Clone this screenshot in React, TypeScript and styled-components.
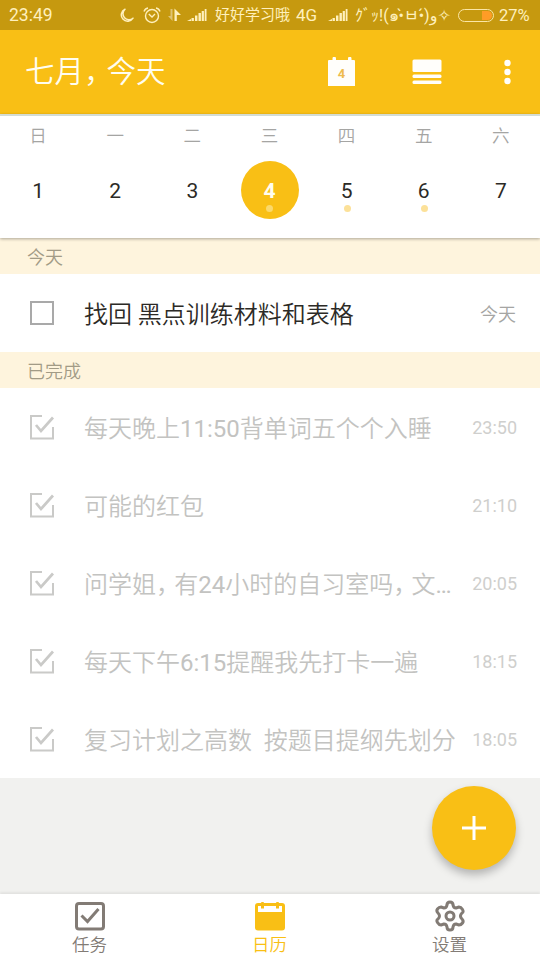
import React from "react";
import styled, { createGlobalStyle } from "styled-components";

const YELLOW = "#f9bf15";

const GlobalStyle = createGlobalStyle`
  * { box-sizing: border-box; }
  body {
    margin: 0;
    background: #f1f1ef;
    font-family: Roboto, "Noto Sans CJK SC", "DejaVu Sans", sans-serif;
  }
  svg { display: block; flex: none; }
`;

const Screen = styled.div`
  width: 540px;
  height: 960px;
  display: flex;
  flex-direction: column;
  overflow: hidden;
  background: #f1f1ef;
`;

const StatusBar = styled.div`
  height: 30px;
  flex: none;
  display: flex;
  align-items: center;
  justify-content: space-between;
  padding: 0 9px;
  background: #c6990f;
  color: #fff0bd;
  font-size: 17.5px;
  line-height: 31px;
  white-space: nowrap;
`;

const StatusGroup = styled.div`
  display: flex;
  align-items: center;
  height: 30px;
`;

const StatusText = styled.span<{ $w: number; $size?: number; $ml?: number }>`
  width: ${(p) => p.$w}px;
  margin-left: ${(p) => p.$ml ?? 0}px;
  font-size: ${(p) => p.$size ?? 17}px;
`;

const StatusIcon = styled.svg<{ $ml: number }>`
  margin-left: ${(p) => p.$ml}px;
`;

const Battery = styled.div`
  width: 36px;
  height: 13px;
  margin-left: 6px;
  padding: 1px;
  border: 1px solid #fbe6a5;
  border-radius: 7px;
  display: flex;
  justify-content: flex-end;
`;

const Charge = styled.div`
  width: 10px;
  border-radius: 0 5px 5px 0;
  background: #ff9c26;
`;

const Header = styled.header`
  height: 84px;
  flex: none;
  display: flex;
  align-items: center;
  padding: 0 29px 0 25px;
  background: ${YELLOW};
`;

const Title = styled.h1`
  margin: 0;
  flex: 1;
  color: #fffdf0;
  font-size: 29.5px;
  font-weight: 350;
  line-height: 88px;
  white-space: nowrap;
`;

const Comma = styled.span`
  letter-spacing: -0.24em;
`;

const Latin = styled.span`
  font-weight: 400;
`;

const HeaderActions = styled.div`
  display: flex;
  align-items: center;
`;

const HeaderIcon = styled.svg<{ $mr?: number }>`
  margin-right: ${(p) => p.$mr ?? 0}px;
`;

const Week = styled.section`
  height: 124px;
  flex: none;
  display: grid;
  grid-template-columns: repeat(7, 77.14px);
  background: #fff;
  box-shadow: 0 1px 3px rgba(0, 0, 0, 0.32);
  border-top: 2px solid #d3dcd4;
  z-index: 1;
`;

const Day = styled.div`
  display: flex;
  flex-direction: column;
  align-items: center;
`;

const Weekday = styled.span`
  height: 38px;
  padding-right: 1px;
  color: #a5a5a3;
  font-size: 17.5px;
  font-weight: 350;
  line-height: 40px;
`;

const DateCircle = styled.div<{ $active?: boolean }>`
  width: 58px;
  height: 58px;
  margin-top: 7px;
  display: flex;
  flex-direction: column;
  align-items: center;
  border-radius: 50%;
  background: ${(p) => (p.$active ? YELLOW : "transparent")};
  color: ${(p) => (p.$active ? "#fffdf0" : "#2c2a26")};
  font-size: 21px;
  font-weight: ${(p) => (p.$active ? 700 : 400)};
  line-height: 60px;
`;

const DateNumber = styled.span`
  height: 44px;
  padding-right: 1px;
`;

const Dot = styled.i<{ $active?: boolean }>`
  width: 7px;
  height: 7px;
  border-radius: 50%;
  background: ${(p) => (p.$active ? "#fbd96b" : "#fce199")};
`;

const SectionLabel = styled.div`
  height: 36px;
  flex: none;
  padding-left: 27px;
  background: #fef4dd;
  color: #a29b86;
  font-size: 18px;
  font-weight: 350;
  line-height: 39px;
`;

const TaskRow = styled.div<{ $done?: boolean }>`
  height: 78px;
  flex: none;
  display: flex;
  align-items: center;
  padding: 0 23px 0 29px;
  background: #fff;
  color: ${(p) => (p.$done ? "#c3c3c1" : "#2c2a26")};
`;

const TaskName = styled.span`
  flex: 1;
  margin-left: 29px;
  font-size: 24px;
  font-weight: 350;
  line-height: 36px;
  padding-top: 4px;
  white-space: pre;
`;

const TaskTime = styled.span<{ $done?: boolean }>`
  padding-top: ${(p) => (p.$done ? 1 : 3)}px;
  margin-right: ${(p) => (p.$done ? 0 : 1)}px;
  color: ${(p) => (p.$done ? "#cfcfcd" : "#a5a5a3")};
  font-size: 18px;
  font-weight: ${(p) => (p.$done ? 400 : 350)};
  line-height: 28px;
`;

const Spacer = styled.div`
  flex: 1;
  position: relative;
`;

const AddButton = styled.button`
  position: absolute;
  top: 8px;
  right: 24px;
  width: 84px;
  height: 84px;
  padding: 0;
  border: 0;
  border-radius: 50%;
  display: grid;
  place-items: center;
  background: ${YELLOW};
  box-shadow: 0 5px 9px rgba(0, 0, 0, 0.25);
`;

const BottomNav = styled.nav`
  height: 66px;
  flex: none;
  display: grid;
  grid-template-columns: repeat(3, 1fr);
  background: #fff;
  box-shadow: 0 -2px 2px rgba(0, 0, 0, 0.06);
`;

const NavItem = styled.div<{ $active?: boolean }>`
  padding-top: 6px;
  display: flex;
  flex-direction: column;
  align-items: center;
  color: ${(p) => (p.$active ? YELLOW : "#827b75")};
  font-size: 17.5px;
  font-weight: 350;
  line-height: 26px;
`;

const NavLabel = styled.span`
  height: 26px;
  padding-right: 1px;
`;

function Signal({ ml }: { ml: number }) {
  return (
    <StatusIcon $ml={ml} width="20" height="14" viewBox="0 0 20 14" fill="#fff0bd">
      <path d="M0 13l4-2v2zM4.500 10h2.400v3H4.500zM8 7.500h2.400V13H8zM11.500 5h2.400v8h-2.400zM14.700 3h2.200v10h-2.200zM17.700 1h1.800v12h-1.800z" />
    </StatusIcon>
  );
}

function CheckBox({ done }: { done?: boolean }) {
  return done ? (
    <svg width="26" height="26" viewBox="0 0 26 26" fill="none" stroke="#cacac8" strokeWidth="2">
      <path d="M13 2H2V24.500h22V13" />
      <path d="M7 11l5 6L24 3.500" strokeWidth="2.700" />
    </svg>
  ) : (
    <svg width="26" height="26" viewBox="0 0 26 26" fill="none" stroke="#a9a9a9" strokeWidth="2">
      <rect x="2" y="2" width="22" height="22" />
    </svg>
  );
}

/* Full-width commas are set tighter, and digits heavier, than the other characters. */
function Phrase({ text }: { text: string }) {
  return (
    <>
      {text.split(/(，|[\d:…]+)/).map((part, i) =>
        part === "，" ? (
          <Comma key={i}>，</Comma>
        ) : i % 2 === 1 ? (
          <Latin key={i}>{part}</Latin>
        ) : (
          <React.Fragment key={i}>{part}</React.Fragment>
        ),
      )}
    </>
  );
}

const days = [
  { name: "日", date: 1 },
  { name: "一", date: 2 },
  { name: "二", date: 3 },
  { name: "三", date: 4, active: true, dot: true },
  { name: "四", date: 5, dot: true },
  { name: "五", date: 6, dot: true },
  { name: "六", date: 7 },
];

const doneTasks = [
  { name: "每天晚上11:50背单词五个个入睡", time: "23:50" },
  { name: "可能的红包", time: "21:10" },
  { name: "问学姐，有24小时的自习室吗，文…", time: "20:05" },
  { name: "每天下午6:15提醒我先打卡一遍", time: "18:15" },
  { name: "复习计划之高数  按题目提纲先划分", time: "18:05" },
];

export default function App() {
  return (
    <Screen>
      <GlobalStyle />
      <StatusBar>
        <span>23:49</span>
        <StatusGroup>
          <StatusIcon $ml={0} width="14" height="15" viewBox="0 0 14 15" fill="none" stroke="#fff0bd" strokeWidth="1.5">
            <path d="M5 1.2A6.3 6.3 0 1 0 13 10.2A6 6 0 0 1 5 1.2z" strokeLinejoin="round" />
          </StatusIcon>
          <StatusIcon $ml={9} width="18" height="17" viewBox="0 0 18 17" fill="none" stroke="#fff0bd" strokeWidth="1.4">
            <circle cx="9" cy="9" r="6.500" />
            <path d="M5.800 7L9 10l3-3M1 4.500Q2 1.500 5 1M17 4.500Q16 1.500 13 1" />
          </StatusIcon>
          <StatusIcon $ml={7} width="13" height="14" viewBox="0 0 13 14">
            <path d="M4.500 1v12L0 8h2.500V1z" fill="#dfc375" />
            <path d="M6.500 13V0.500L13 7H8.800v6z" fill="#fff0bd" />
          </StatusIcon>
          <Signal ml={6} />
          <StatusText $w={75} $size={15} $ml={8}>好好学习哦</StatusText>
          <StatusText $w={24} $ml={6}>4G</StatusText>
          <Signal ml={8} />
          <StatusText $w={97} $size={16} $ml={7}>ｸﾞｯ!(๑•̀ㅂ•́)و✧</StatusText>
          <Battery>
            <Charge />
          </Battery>
          <StatusText $w={32} $size={16.5} $ml={5}>27%</StatusText>
        </StatusGroup>
      </StatusBar>

      <Header>
        <Title>
          <Phrase text="七月，今天" />
        </Title>
        <HeaderActions>
          <HeaderIcon $mr={57} width="27" height="30" viewBox="0 0 27 30">
            <path d="M0 4q0-1 1-1h3.500V1.500a1.500 1.500 0 0 1 3.500 0V3h12V1.500a1.500 1.500 0 0 1 3.500 0V3H26q1 0 1 1v25H0z" fill="#fffefb" />
            <text x="13.500" y="21" textAnchor="middle" fontSize="13" fontWeight="700" fill="#eebb4e">4</text>
          </HeaderIcon>
          <HeaderIcon $mr={62} width="30" height="26" viewBox="0 0 30 26" fill="#fffefb">
            <rect x="0.500" y="0.500" width="29" height="12.500" rx="1.500" />
            <rect x="0.500" y="15.500" width="29" height="3.500" rx="1.500" />
            <rect x="0.500" y="21.500" width="29" height="3.500" rx="1.500" />
          </HeaderIcon>
          <svg width="7" height="26" viewBox="0 0 7 26" fill="#fffefb">
            <circle cx="3.500" cy="4" r="3.200" />
            <circle cx="3.500" cy="13" r="3.200" />
            <circle cx="3.500" cy="22" r="3.200" />
          </svg>
        </HeaderActions>
      </Header>

      <Week>
        {days.map((d) => (
          <Day key={d.date}>
            <Weekday>{d.name}</Weekday>
            <DateCircle $active={d.active}>
              <DateNumber>{d.date}</DateNumber>
              {d.dot && <Dot $active={d.active} />}
            </DateCircle>
          </Day>
        ))}
      </Week>

      <SectionLabel>今天</SectionLabel>
      <TaskRow>
        <CheckBox />
        <TaskName>找回 黑点训练材料和表格</TaskName>
        <TaskTime>今天</TaskTime>
      </TaskRow>
      <SectionLabel>已完成</SectionLabel>
      {doneTasks.map((t) => (
        <TaskRow key={t.time} $done>
          <CheckBox done />
          <TaskName>
            <Phrase text={t.name} />
          </TaskName>
          <TaskTime $done>{t.time}</TaskTime>
        </TaskRow>
      ))}

      <Spacer>
        <AddButton>
          <svg width="24" height="24" viewBox="0 0 24 24" stroke="#fff" strokeWidth="3">
            <path d="M12 0v24M0 12h24" />
          </svg>
        </AddButton>
      </Spacer>

      <BottomNav>
        <NavItem>
          <svg width="32" height="32" viewBox="0 0 32 32" fill="none" stroke="#827b75" strokeWidth="3">
            <rect x="2.500" y="3.500" width="27" height="25.500" rx="2.500" />
            <path d="M7.500 15.500l6 6L24.500 9" />
          </svg>
          <NavLabel>任务</NavLabel>
        </NavItem>
        <NavItem $active>
          <svg width="32" height="32" viewBox="0 0 32 32">
            <rect x="1" y="3" width="30" height="27.500" rx="3" fill={YELLOW} />
            <path d="M4 6h3v2.500h3V6h12v2.500h3V6h3v6H4z" fill="#fff" />
            <path d="M8.500 2v6M23.500 2v6" stroke={YELLOW} strokeWidth="2.500" />
          </svg>
          <NavLabel>日历</NavLabel>
        </NavItem>
        <NavItem>
          <svg width="32" height="32" viewBox="0 0 32 32" fill="none" stroke="#827b75" strokeWidth="3" strokeLinejoin="round">
            <path d="M13 5Q13 2 16 2T19 5Q19.500 8 22 8L25 7Q27 7 28.500 9.500T28 13Q25 16 28 19Q30 21 28.500 23T25 25L22 24Q19.500 24 19 27Q19 30 16 30T13 27Q12.500 24 10 24L7 25Q5 25 3.500 22.500T4 19Q7 16 4 13Q2 11 3.500 9T7 7L10 8Q12.500 8 13 5z" />
            <circle cx="16" cy="16" r="4" />
          </svg>
          <NavLabel>设置</NavLabel>
        </NavItem>
      </BottomNav>
    </Screen>
  );
}
